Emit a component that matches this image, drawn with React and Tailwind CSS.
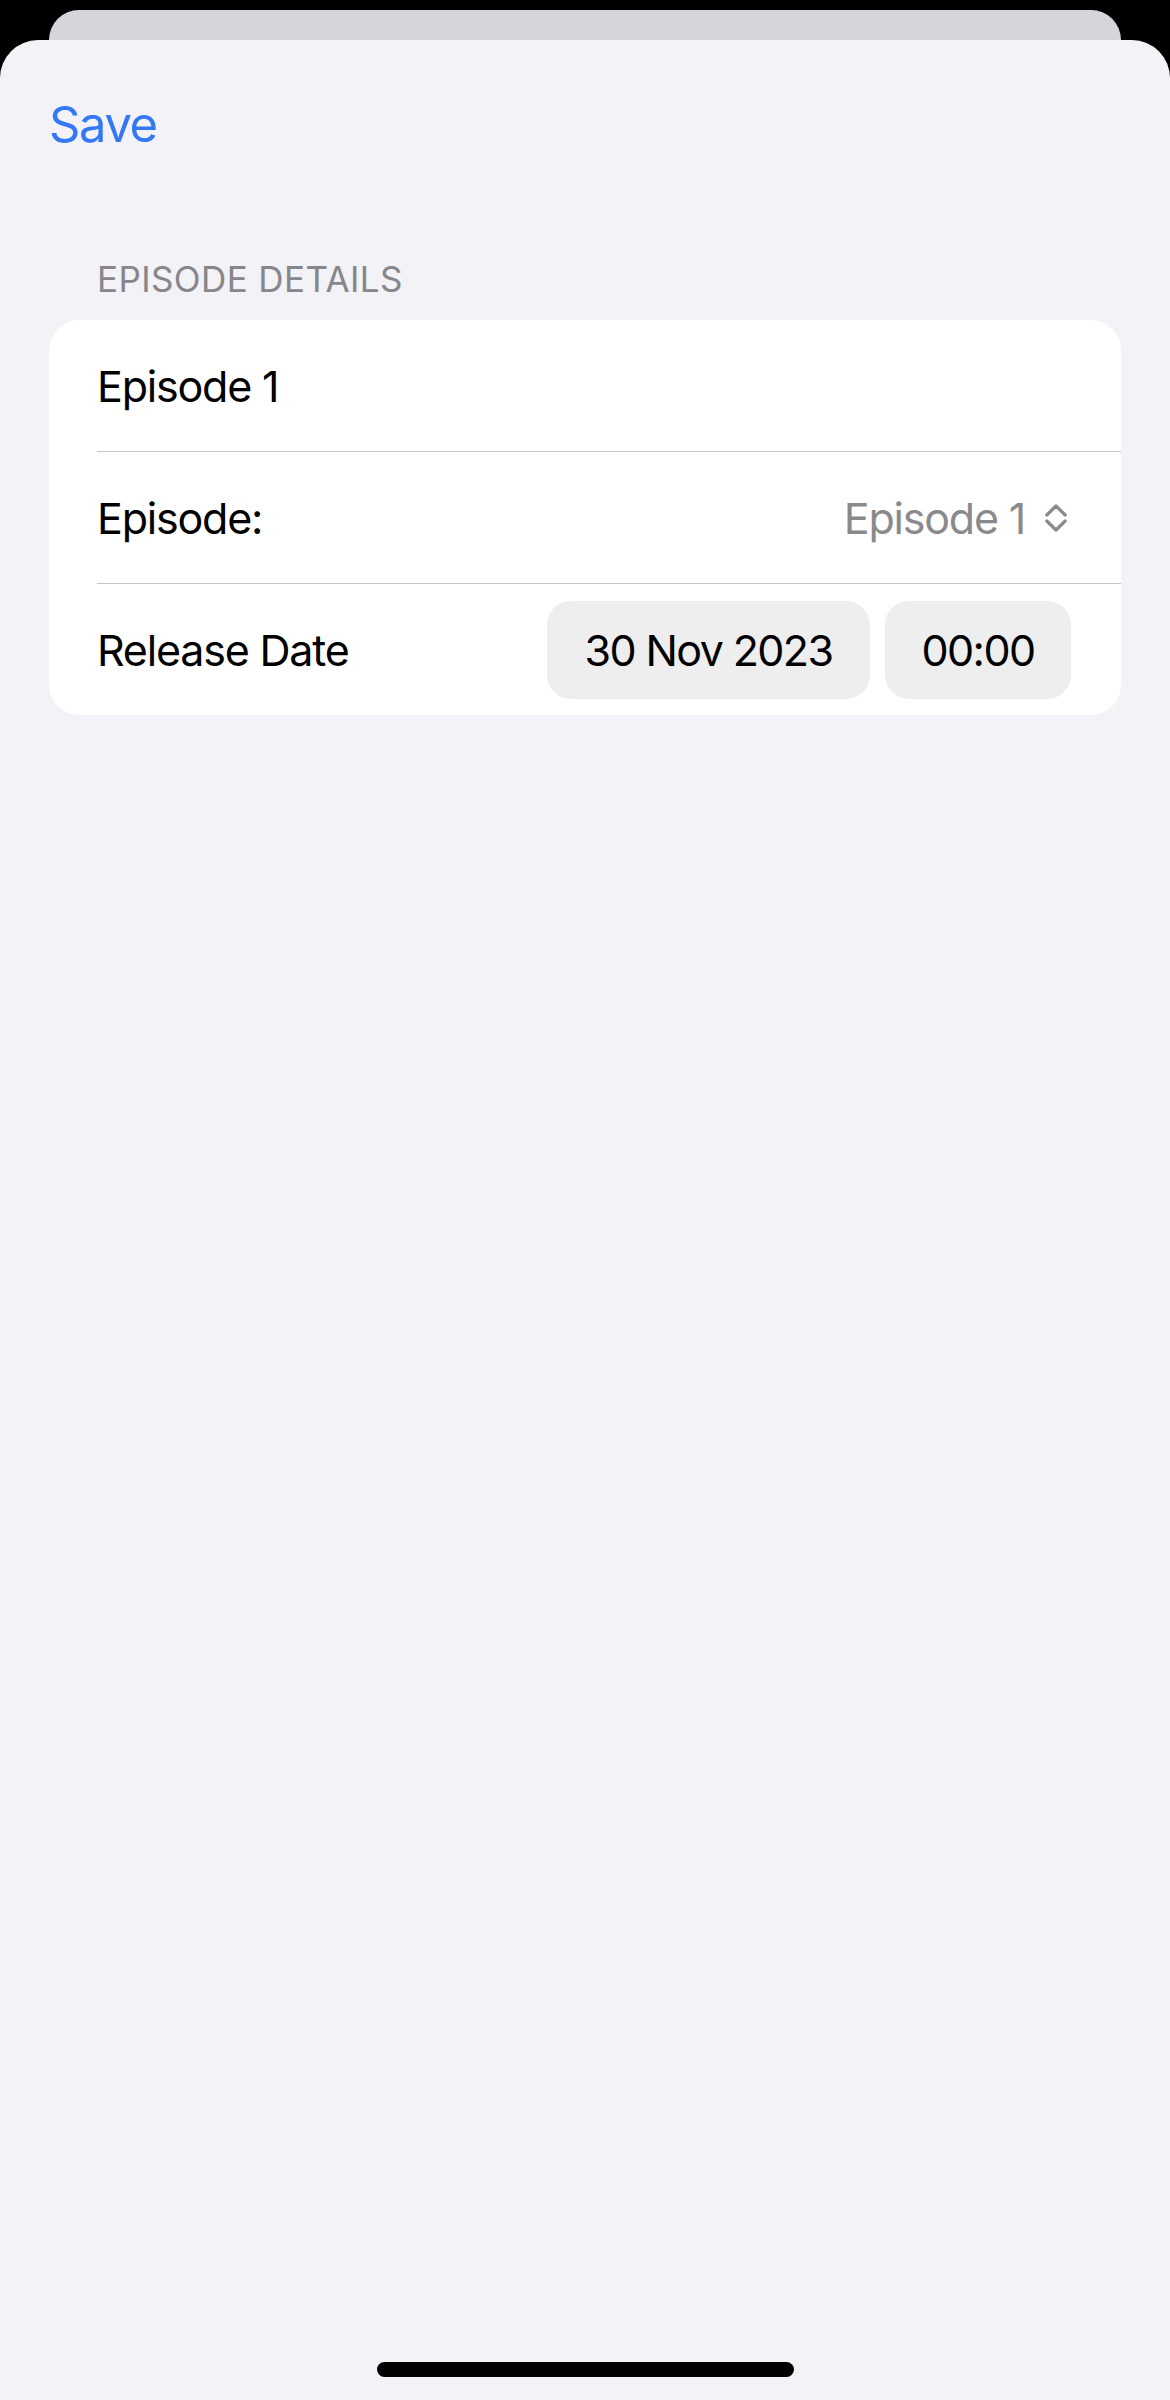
import React from "react";

function UpDownChevron() {
  return (
    <svg width="22" height="28" viewBox="0 0 22 28" fill="none" stroke="#8a8a8e" strokeWidth="3.2" strokeLinecap="round" strokeLinejoin="round">
      <path d="M1.8 11 L11 2 L20.2 11" />
      <path d="M1.8 17 L11 26 L20.2 17" />
    </svg>
  );
}

function Row({ children, last }) {
  return (
    <div className="flex flex-col">
      <div className="flex h-[131px] items-center pl-[48px] pr-[50px]">{children}</div>
      {!last && <div className="ml-[48px] h-px bg-[#c6c6c8]" />}
    </div>
  );
}

export default function App() {
  return (
    <div
      className="flex min-h-[2400px] w-[1170px] flex-col bg-black"
      style={{ fontFamily: 'Inter, "Liberation Sans", sans-serif' }}
    >
      {/* sheet underneath */}
      <div className="mx-[49px] mt-[10px] h-[40px] rounded-t-[30px] bg-[#d6d5da]" />

      {/* presented sheet */}
      <div className="-mt-[10px] flex flex-1 flex-col rounded-t-[38px] bg-[#f2f2f7]">
        <div className="px-[49px] pt-[54px]">
          <button className="text-[49px] leading-[62px] tracking-[-1.4px] text-[#3478f6]">Save</button>
        </div>

        <div className="px-[97px] pt-[102px] text-[35px] leading-[42px] tracking-[0.4px] text-[#86868b]">
          EPISODE DETAILS
        </div>

        <div className="mx-[49px] mt-[20px] overflow-hidden rounded-[30px] bg-white text-[43px] leading-[52px] tracking-[-1.2px] text-black">
          <Row>
            <span>Episode 1</span>
          </Row>
          <Row>
            <span>Episode:</span>
            <div className="ml-auto mr-[4px] flex items-center gap-[20px] text-[#8a8a8e]">
              <span>Episode 1</span>
              <UpDownChevron />
            </div>
          </Row>
          <Row last>
            <span>Release Date</span>
            <div className="ml-auto flex items-center gap-[15px] tracking-[-1.6px]">
              <div className="flex h-[98px] w-[323px] items-center justify-center rounded-[24px] bg-[#eeeeef]">
                30 Nov 2023
              </div>
              <div className="flex h-[98px] w-[186px] items-center justify-center rounded-[24px] bg-[#eeeeef]">
                00:00
              </div>
            </div>
          </Row>
        </div>

        <div className="mt-auto mb-[23px] flex justify-center">
          <div className="h-[15px] w-[417px] rounded-full bg-black" />
        </div>
      </div>
    </div>
  );
}
